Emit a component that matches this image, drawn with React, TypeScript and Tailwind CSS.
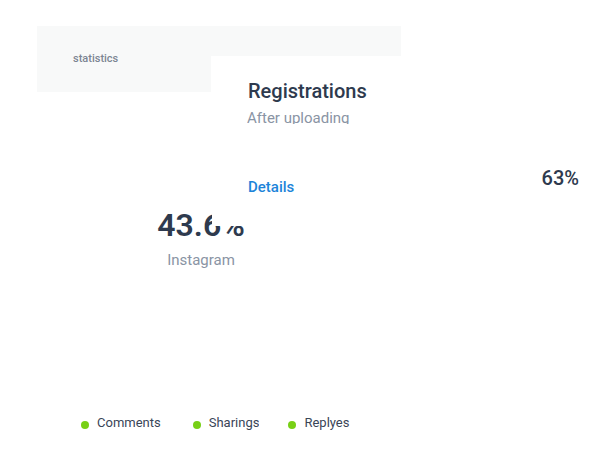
import React from "react";

export default function App() {
  return (
    <div className="relative w-[614px] h-[473px] bg-white overflow-hidden" style={{ fontFamily: "Roboto, 'Noto Sans', sans-serif" }}>
      <div className="ml-[37px] mt-[26px] w-[364px] h-[66px] bg-[#f8f9f9] pl-[36px] pt-[25px]">
        <span className="block text-[11px] leading-[16px] font-medium text-[#7c8593]">statistics</span>
      </div>
      <div className="-mt-[36px] ml-[211px] w-[390px] bg-white pl-[37px] pt-[21px]">
        <div className="text-[20px] leading-[28px] font-medium text-[#2e3a4e]">Registrations</div>
        <div className="mt-[3px] h-[16px] overflow-hidden text-[15px] leading-[20px] text-[#8a94a4] -ml-px">After uploading</div>
        <div className="flex items-start mt-[42px] pr-[22px]">
          <div className="mt-[11px] text-[15px] leading-[20px] font-medium text-[#1d84d9]">Details</div>
          <div className="ml-auto text-[20px] leading-[24px] font-medium text-[#2e3a4e]">63%</div>
        </div>
      </div>
      <div className="relative ml-[101px] w-[200px] mt-[8px] text-center">
        <div className="text-[32px] leading-[40px] font-semibold text-[#2e3a4e]">43.6%</div>
        <div className="absolute left-[111px] top-[-6px] w-[44px] h-[27px] bg-white" />
        <div className="mt-[5px] text-[15px] leading-[20px] text-[#8a94a4]">Instagram</div>
      </div>
      <div className="flex items-center ml-[81px] mt-[144px] text-[13px] leading-[18px] text-[#3a4557]">
        <div className="flex items-center mr-[32px]">
          <span className="w-[8px] h-[8px] rounded-full bg-[#78d016] mr-[8px] mt-[3px]" />
          <span>Comments</span>
        </div>
        <div className="flex items-center mr-[29px]">
          <span className="w-[8px] h-[8px] rounded-full bg-[#78d016] mr-[8px] mt-[3px]" />
          <span className="h-[16px] mb-[2px] overflow-hidden">Sharings</span>
        </div>
        <div className="flex items-center">
          <span className="w-[8px] h-[8px] rounded-full bg-[#78d016] mr-[8px] mt-[3px]" />
          <span>Replyes</span>
        </div>
      </div>
    </div>
  );
}
